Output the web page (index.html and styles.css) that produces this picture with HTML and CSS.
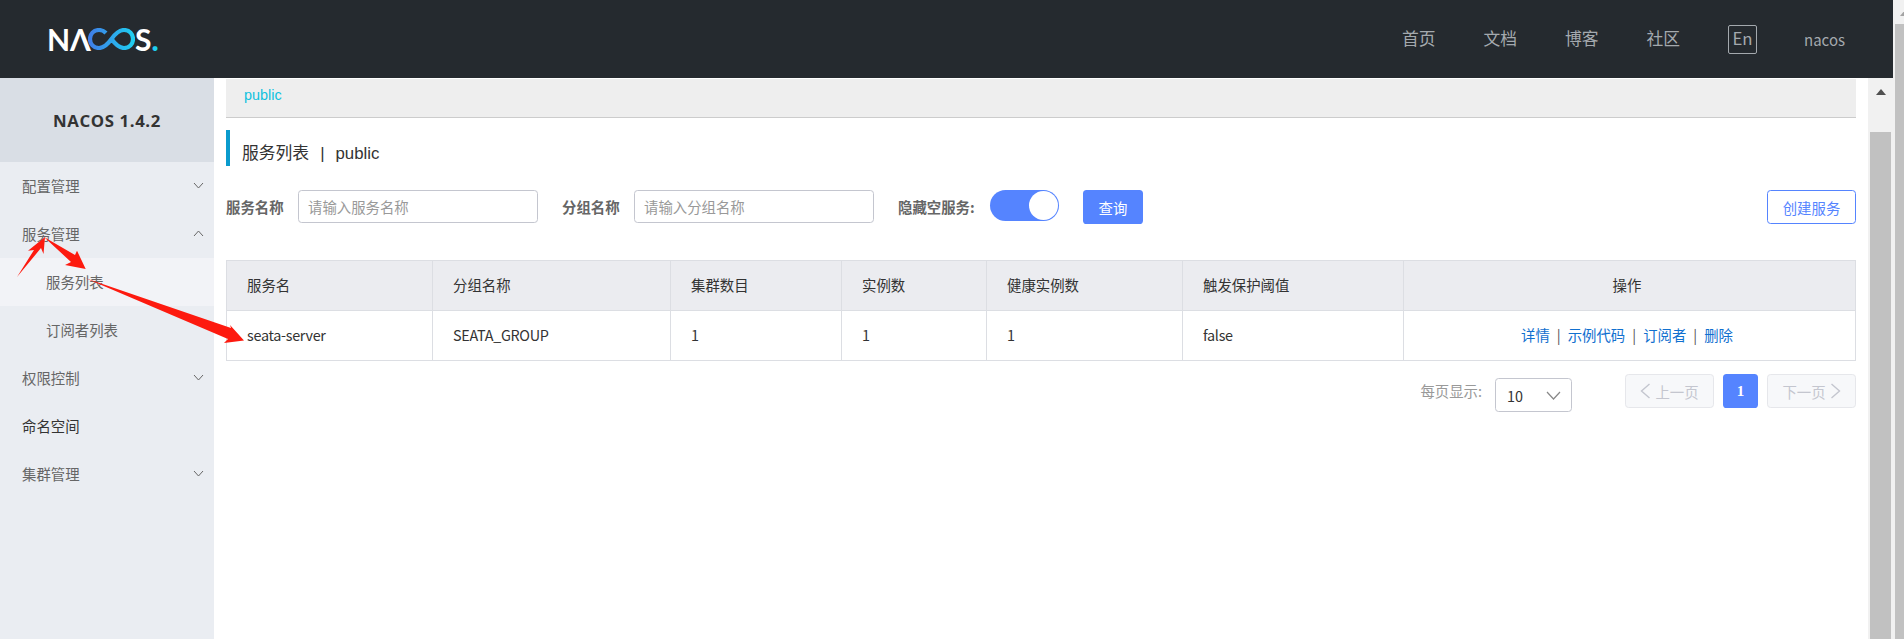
FILE: index.html
```html
<!DOCTYPE html>
<html lang="zh-CN">
<head>
  <meta charset="UTF-8">
  <title>Nacos</title>
  <link rel="stylesheet" href="styles.css">
</head>
<body>

<div class="page">
  <div class="frame">
    <header class="header">
      <div class="logo">
        <span class="logo-text">NΛ</span>
        <svg class="logo-loop" width="47" height="22" viewBox="0 0 47 22">
          <defs>
            <linearGradient id="loopColor" x1="0" y1="0" x2="1" y2="0">
              <stop offset="0" stop-color="#3f7fe8"/>
              <stop offset="1" stop-color="#1fcdf0"/>
            </linearGradient>
          </defs>
          <path d="M18 5C16 3 14 2 11 2C5.500 2 2 6 2 11C2 16 5.500 20 11 20C17 20 21 14.500 23.500 11C26 7.500 30 2 36 2C41.500 2 45 6 45 11C45 16 41.500 20 36 20C30 20 26 14.500 23.500 11" fill="none" stroke="url(#loopColor)" stroke-width="4.200"/>
        </svg>
        <span class="logo-text">S</span><span class="logo-dot">.</span>
      </div>
      <nav class="nav">
        <a class="nav-link">首页</a>
        <a class="nav-link">文档</a>
        <a class="nav-link">博客</a>
        <a class="nav-link">社区</a>
        <span class="lang">En</span>
        <span class="user">nacos</span>
      </nav>
    </header>

    <div class="main">
      <aside class="sidebar">
        <div class="side-title">NACOS 1.4.2</div>
        <div class="side-item">配置管理<svg class="chev" width="11" height="7" viewBox="0 0 11 7"><path d="M1 1l4.500 5 4.500-5"/></svg></div>
        <div class="side-item">服务管理<svg class="chev" width="11" height="7" viewBox="0 0 11 7"><path d="M1 6l4.500-5 4.500 5"/></svg></div>
        <div class="side-item sub active">服务列表</div>
        <div class="side-item sub">订阅者列表</div>
        <div class="side-item">权限控制<svg class="chev" width="11" height="7" viewBox="0 0 11 7"><path d="M1 1l4.500 5 4.500-5"/></svg></div>
        <div class="side-item dark">命名空间</div>
        <div class="side-item">集群管理<svg class="chev" width="11" height="7" viewBox="0 0 11 7"><path d="M1 1l4.500 5 4.500-5"/></svg></div>
      </aside>

      <main class="content">
        <div class="ns-bar">public</div>
        <h1 class="page-title">服务列表<span class="title-sep">|</span>public</h1>

        <div class="filters">
          <label class="filter-label">服务名称</label>
          <div class="input">请输入服务名称</div>
          <label class="filter-label second">分组名称</label>
          <div class="input">请输入分组名称</div>
          <label class="filter-label third">隐藏空服务:</label>
          <div class="switch"><span class="knob"></span></div>
          <button class="btn primary">查询</button>
          <button class="btn outline">创建服务</button>
        </div>

        <table class="table">
          <colgroup>
            <col class="c1"><col class="c2"><col class="c3"><col class="c4"><col class="c5"><col class="c6"><col class="c7">
          </colgroup>
          <thead>
            <tr>
              <th>服务名</th>
              <th>分组名称</th>
              <th>集群数目</th>
              <th>实例数</th>
              <th>健康实例数</th>
              <th>触发保护阈值</th>
              <th class="center">操作</th>
            </tr>
          </thead>
          <tbody>
            <tr>
              <td>seata-server</td>
              <td>SEATA_GROUP</td>
              <td>1</td>
              <td>1</td>
              <td>1</td>
              <td>false</td>
              <td class="center">
                <a class="link">详情</a><span class="sep">|</span><a class="link">示例代码</a><span class="sep">|</span><a class="link">订阅者</a><span class="sep">|</span><a class="link">删除</a>
              </td>
            </tr>
          </tbody>
        </table>

        <div class="pager">
          <span class="pager-label">每页显示:</span>
          <div class="select">10<svg width="15" height="9" viewBox="0 0 15 9"><path d="M1 1l6.500 7 6.500-7"/></svg></div>
          <button class="page-btn">
            <svg width="11" height="16" viewBox="0 0 11 16"><path d="M9.500 1l-8 7 8 7"/></svg>上一页
          </button>
          <button class="page-num">1</button>
          <button class="page-btn">
            下一页<svg width="11" height="16" viewBox="0 0 11 16"><path d="M1.500 1l8 7-8 7"/></svg>
          </button>
        </div>
      </main>

      <div class="inner-scroll">
        <span class="scroll-arrow"></span>
        <div class="inner-thumb"></div>
      </div>
    </div>
  </div>

  <div class="outer-scroll">
    <div class="outer-top"><span class="outer-arrow"></span></div>
    <div class="outer-thumb"></div>
  </div>
</div>

<!-- arrows someone painted over the screenshot -->
<svg class="marks" width="1904" height="639" viewBox="0 0 1904 639">
  <polygon points="17,277 34,250 28,250.700 45,237 43.500,254 41,248"/>
  <polygon points="44,237 75,255 77,250.700 85.700,269 65,265 71,262"/>
  <polygon points="85,278 231,328 230,325 244,340.500 224,343 228,339"/>
</svg>

</body>
</html>
```

FILE: styles.css
```css
/* page */
html, body {
  margin: 0;
  height: 100%;
  overflow: hidden;
}
body {
  position: relative;
  background: #fff;
  color: #333;
  font-family: "Noto Sans CJK SC", sans-serif;
  font-size: 14.4px;
}
.page {
  display: flex;
  height: 100vh;
}
.frame {
  flex: 1;
  display: flex;
  flex-direction: column;
  min-width: 0;
}

/* header */
.header {
  height: 78px;
  flex: none;
  display: flex;
  align-items: center;
  justify-content: space-between;
  background: #252a2f;
}
.logo {
  display: flex;
  align-items: center;
  margin-left: 47px;
  height: 22px;
  color: #fff;
}
.logo-text {
  font-family: "Lato", sans-serif;
  font-size: 30px;
  font-weight: 700;
  line-height: 22px;
}
.logo-loop {
  margin: 0 0 0 -3px;
}
.logo-dot {
  color: #1fcdf0;
  font-family: "Lato", sans-serif;
  font-size: 30px;
  font-weight: 900;
  line-height: 22px;
}
.nav {
  display: flex;
  align-items: center;
  margin-right: 48px;
  color: #a4a9ae;
}
.nav-link {
  width: 34px;
  margin-right: 47.500px;
  padding-bottom: 2px;
  font-size: 16.8px;
  white-space: nowrap;
}
.lang {
  width: 29px;
  height: 29px;
  box-sizing: border-box;
  border: 1px solid #a4a9ae;
  border-radius: 2px;
  margin-right: 47px;
  font-size: 16.8px;
  line-height: 25px;
  text-align: center;
}
.user {
  font-size: 15px;
}

/* layout */
.main {
  flex: 1;
  display: flex;
  min-height: 0;
}

/* sidebar */
.sidebar {
  width: 214px;
  flex: none;
  background: #eaedf2;
}
.side-title {
  height: 84px;
  line-height: 86px;
  background: #d9dee5;
  font-family: "Open Sans", "Noto Sans CJK SC", sans-serif;
  font-size: 16.8px;
  font-weight: 700;
  letter-spacing: 0.6px;
  text-align: center;
}
.side-item {
  height: 48px;
  box-sizing: border-box;
  display: flex;
  align-items: center;
  justify-content: space-between;
  padding: 0 10px 2px 22px;
  color: #666;
}
.side-item.sub {
  padding-left: 46px;
}
.side-item.active {
  background: #f2f3f7;
}
.side-item.dark {
  color: #333;
}
.chev path {
  fill: none;
  stroke: #666;
  stroke-width: 1;
}

/* content */
.content {
  flex: 1;
  min-width: 0;
  margin: 0 12px;
}
.ns-bar {
  height: 38px;
  margin-top: 1px;
  padding-left: 18px;
  font-family: "Liberation Sans", sans-serif;
  line-height: 32px;
  background: #eee;
  border-bottom: 1px solid #ccc;
  color: #11c2de;
}
.page-title {
  height: 36px;
  margin: 12px 0 0;
  padding-left: 12px;
  border-left: 4px solid #0a9bcd;
  font-family: "Liberation Sans", "Noto Sans CJK SC", sans-serif;
  font-size: 16.8px;
  font-weight: 400;
  line-height: 48px;
  color: #333;
}
.title-sep {
  margin: 0 11px;
}

/* filters */
.filters {
  display: flex;
  align-items: flex-start;
  margin-top: 24px;
  height: 34px;
}
.filter-label {
  width: 72px;
  flex: none;
  font-weight: 700;
  line-height: 33px;
  color: #666;
  white-space: nowrap;
}
.filter-label.second {
  width: 72px;
  margin-left: 24px;
}
.filter-label.third {
  width: 92px;
  margin-left: 24px;
}
.input {
  width: 240px;
  height: 33px;
  flex: none;
  box-sizing: border-box;
  padding-left: 9px;
  border: 1px solid #c4c6cf;
  border-radius: 3.600px;
  line-height: 31px;
  color: #999;
}
.switch {
  width: 69px;
  height: 31px;
  flex: none;
  display: flex;
  justify-content: flex-end;
  align-items: center;
  padding-right: 1px;
  box-sizing: border-box;
  border-radius: 16px;
  background: #5584ff;
}
.knob {
  width: 29px;
  height: 29px;
  border-radius: 50%;
  background: #fff;
}
.btn {
  height: 34px;
  padding: 0;
  font: inherit;
  border-radius: 3.600px;
}
.btn.primary {
  width: 60px;
  margin-left: 24px;
  border: none;
  background: #5584ff;
  color: #fff;
}
.btn.outline {
  width: 89px;
  margin-left: auto;
  border: 1px solid #5584ff;
  background: #fff;
  color: #5584ff;
}

/* table */
.table {
  width: 1629px;
  margin-top: 36px;
  border-collapse: collapse;
  table-layout: fixed;
}
.c1 { width: 206px; }
.c2 { width: 238px; }
.c3 { width: 171px; }
.c4 { width: 145px; }
.c5 { width: 196px; }
.c6 { width: 221px; }
.c7 { width: 452px; }
.table th, .table td {
  height: 50px;
  box-sizing: border-box;
  padding: 0 0 2px 20px;
  border: 1px solid #dcdee3;
  font-weight: 400;
  text-align: left;
  color: #333;
}
.table td {
  letter-spacing: -0.3px;
}
.table th {
  background: #ebecf0;
}
.table .center {
  padding-left: 0;
  padding-right: 5px;
  text-align: center;
  letter-spacing: 0;
}
.link {
  color: #1170cf;
}
.sep {
  margin: 0 7px;
  color: #555;
}

/* pager */
.pager {
  display: flex;
  align-items: flex-start;
  margin-top: 13px;
}
.pager-label {
  margin-left: auto;
  margin-right: 13px;
  padding-top: 6px;
  color: #999;
}
.select {
  width: 77px;
  height: 34px;
  box-sizing: border-box;
  display: flex;
  align-items: center;
  justify-content: space-between;
  margin-top: 4px;
  margin-right: 53px;
  padding: 0 10px 0 11px;
  border: 1px solid #c4c6cf;
  border-radius: 3.600px;
}
.select path {
  fill: none;
  stroke: #888;
  stroke-width: 1.200;
}
.page-btn {
  width: 89px;
  height: 34px;
  display: flex;
  align-items: center;
  justify-content: center;
  gap: 4px;
  padding: 0;
  border: 1px solid #e6e7eb;
  border-radius: 3.600px;
  background: #f7f8fa;
  color: #c4c6cf;
  font: inherit;
}
.page-btn path {
  fill: none;
  stroke: #c4c6cf;
  stroke-width: 1.400;
}
.page-num {
  width: 35px;
  height: 34px;
  margin: 0 9px;
  padding: 0;
  border: none;
  border-radius: 3.600px;
  background: #5584ff;
  color: #fff;
  font-family: "Liberation Serif", serif;
  font-size: 15px;
  font-weight: 700;
}

/* scrollbars */
.inner-scroll {
  width: 25px;
  flex: none;
  display: flex;
  flex-direction: column;
  align-items: center;
  background: #f1f1f1;
}
.scroll-arrow {
  margin-top: 11px;
  border: solid transparent;
  border-width: 0 5.500px 6px;
  border-bottom-color: #505050;
}
.inner-thumb {
  width: 21px;
  flex: 1;
  margin-top: 37px;
  background: #c1c1c1;
}
.outer-scroll {
  width: 11px;
  flex: none;
  display: flex;
  flex-direction: column;
  align-items: flex-end;
  background: #f1f1f1;
}
.outer-top {
  height: 24px;
  width: 9px;
  flex: none;
  overflow: hidden;
}
.outer-arrow {
  display: block;
  width: 0;
  margin: 10px 0 0 5px;
  border: solid transparent;
  border-width: 0 5.500px 6px;
  border-bottom-color: #a3a3a3;
}
.outer-thumb {
  width: 9px;
  flex: 1;
  background: #c1c1c1;
}

/* red marks painted on top */
.marks {
  position: absolute;
  left: 0;
  top: 0;
  pointer-events: none;
}
.marks polygon {
  fill: #fd1a0f;
}
```
